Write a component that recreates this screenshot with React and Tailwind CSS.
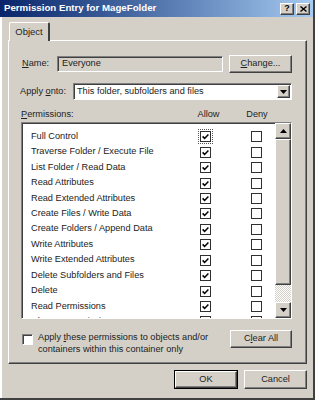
import React from "react";

const perms = [
  "Full Control",
  "Traverse Folder / Execute File",
  "List Folder / Read Data",
  "Read Attributes",
  "Read Extended Attributes",
  "Create Files / Write Data",
  "Create Folders / Append Data",
  "Write Attributes",
  "Write Extended Attributes",
  "Delete Subfolders and Files",
  "Delete",
  "Read Permissions",
  "Change Permissions",
];

const raised =
  "border border-t-white border-l-white border-b-[#404040] border-r-[#404040] shadow-[inset_-1px_-1px_0_#808080]";
const sunken =
  "border border-t-[#808080] border-l-[#808080] border-b-white border-r-white shadow-[inset_1px_1px_0_#404040]";

const Box = ({ checked, focus }) => (
  <span
    className={
      focus
        ? "w-[11px] h-[11px] bg-white border border-[#303030] flex items-center justify-center outline outline-1 outline-dotted outline-offset-1 outline-[#555]"
        : "w-[11px] h-[11px] bg-white border border-[#303030] flex items-center justify-center"
    }
  >
    {checked && (
      <svg width="7" height="7" viewBox="0 0 7 7">
        <path d="M0.6 3.4 L2.6 5.4 L6.4 1.4" stroke="#000" strokeWidth="1.5" fill="none" />
      </svg>
    )}
  </span>
);

const Arrow = ({ up }) => (
  <svg width="7" height="4" viewBox="0 0 7 4">
    <path d={up ? "M3.5 0 L7 4 L0 4 Z" : "M0 0 L7 0 L3.5 4 Z"} fill="#000" />
  </svg>
);

export default function App() {
  return (
    <div className="w-[315px] h-[400px] bg-[#d4d0c8] flex flex-col font-['Liberation_Sans',Arial,sans-serif] text-[9.2px] text-[#222] border-b-2 border-r-2 border-b-[#404040] border-r-[#404040] overflow-hidden">
      {/* title bar */}
      <div className="h-[17px] flex items-center justify-between bg-gradient-to-r from-[#0a246a] to-[#a6caf0] pl-[4px] pr-[3px]">
        <span className="text-white font-bold text-[9.7px]">Permission Entry for MageFolder</span>
        <div className="flex gap-[2px]">
          <span className={`w-[14px] h-[12px] bg-[#d4d0c8] flex items-center justify-center font-bold text-[9px] text-black ${raised}`}>?</span>
          <span className={`w-[14px] h-[12px] bg-[#d4d0c8] flex items-center justify-center ${raised}`}>
            <svg width="7" height="6" viewBox="0 0 7 6">
              <path d="M0.5 0.5 L6.5 5.5 M6.5 0.5 L0.5 5.5" stroke="#000" strokeWidth="1.4" />
            </svg>
          </span>
        </div>
      </div>

      <div className="flex-1 border-l-2 border-l-white flex flex-col pl-[6px] pr-[5px]">
        {/* tab */}
        <div className="mt-[5px] flex">
          <div className="ml-[1px] w-[41px] h-[19px] border-t border-l border-white border-r-2 border-r-[#404040] rounded-t-[2px] flex items-center justify-center text-[9.5px] -mb-px bg-[#d4d0c8] relative z-10">
            Object
          </div>
        </div>

        {/* panel */}
        <div className="h-[324px] w-[299px] border border-t-white border-l-white border-b-[#404040] border-r-[#404040] shadow-[inset_-1px_-1px_0_#808080] pl-[12px] pr-[14px] pt-[14px]">
          <div className="flex items-center h-[18px]">
            <span className="w-[35px] ml-[1px]">
              <u>N</u>ame:
            </span>
            <div className={`w-[166px] h-[16px] bg-[#d4d0c8] flex items-center pl-[4px] ${sunken}`}>Everyone</div>
            <div className={`ml-[6px] w-[63px] h-[18px] flex items-center justify-center ${raised}`}>
              <span>
                <u>C</u>hange...
              </span>
            </div>
          </div>

          <div className="flex items-center h-[17px] mt-[10px]">
            <span className="w-[53px] -ml-[1px]">
              Apply <u>o</u>nto:
            </span>
            <div className={`w-[219px] h-[17px] bg-white flex items-center justify-between pl-[3px] pr-[1px] ${sunken}`}>
              <span>This folder, subfolders and files</span>
              <span className={`w-[13px] h-[13px] bg-[#d4d0c8] flex items-center justify-center ${raised}`}>
                <Arrow />
              </span>
            </div>
          </div>

          <div className="flex items-center h-[12px] mt-[9px]">
            <span className="w-[174px]">
              <u>P</u>ermissions:
            </span>
            <span className="w-[27px] text-center">Allow</span>
            <span className="ml-[23px] w-[24px] text-center">Deny</span>
          </div>

          <div className={`mt-[1px] w-[271px] h-[197px] bg-white flex overflow-hidden ${sunken}`}>
            <div className="flex-1 pt-[6px] pl-[9px] overflow-hidden">
              {perms.map((p, i) => (
                <div key={p} className="h-[15.45px] flex items-center">
                  <span className="w-[169px] whitespace-nowrap">{p}</span>
                  <Box checked focus={i === 0} />
                  <span className="ml-[40px]">
                    <Box />
                  </span>
                </div>
              ))}
            </div>
            <div className="w-[16px] flex flex-col">
              <div className={`h-[16px] bg-[#d4d0c8] flex items-center justify-center ${raised}`}>
                <Arrow up />
              </div>
              <div className={`h-[146px] bg-[#d4d0c8] ${raised}`}></div>
              <div className="flex-1 bg-[repeating-conic-gradient(#ffffff_0_25%,#d4d0c8_0_50%)] bg-[length:2px_2px]"></div>
              <div className={`h-[16px] bg-[#d4d0c8] flex items-center justify-center ${raised}`}>
                <Arrow />
              </div>
            </div>
          </div>

          <div className="flex mt-[11px]">
            <span className={`mt-[4px] ml-[1px] w-[11px] h-[11px] bg-white ${sunken}`}></span>
            <div className="ml-[5px] w-[182px] leading-[12px] pt-[1px]">
              Apply <u>t</u>hese permissions to objects and/or containers within this container only
            </div>
            <div className={`ml-[10px] w-[62px] h-[18px] flex items-center justify-center ${raised}`}>
              <span>
                C<u>l</u>ear All
              </span>
            </div>
          </div>
        </div>

        {/* dialog buttons */}
        <div className="flex justify-end gap-[6px] mt-[6px] pr-[1px]">
          <div className="w-[64px] h-[19px] border border-black">
            <div className={`w-full h-full flex items-center justify-center ${raised}`}>OK</div>
          </div>
          <div className={`w-[63px] h-[19px] flex items-center justify-center ${raised}`}>Cancel</div>
        </div>
      </div>
    </div>
  );
}
